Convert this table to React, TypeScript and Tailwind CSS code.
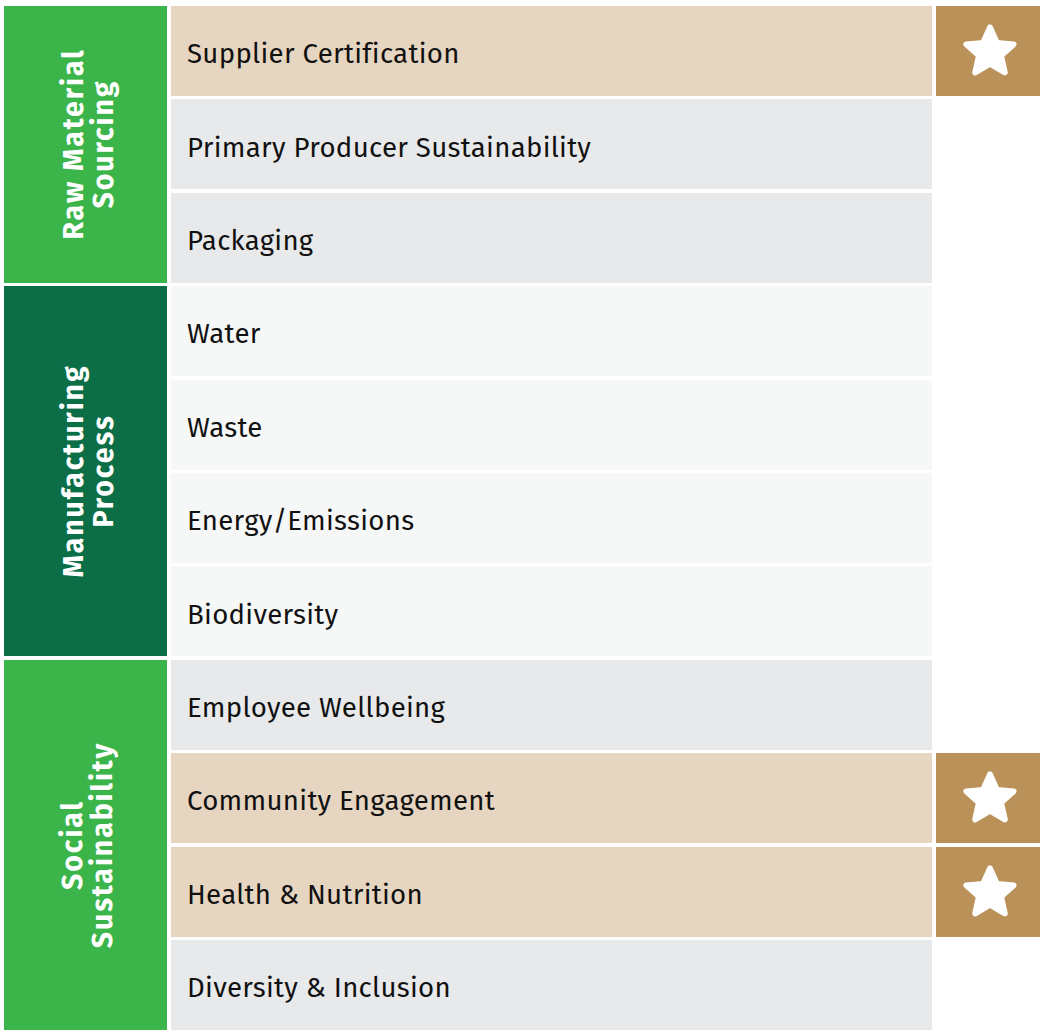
import React from "react";

type Row = { label: string; kind: "beige" | "gray" | "light"; star?: boolean };

const rows: Row[] = [
  { label: "Supplier Certification", kind: "beige", star: true },
  { label: "Primary Producer Sustainability", kind: "gray" },
  { label: "Packaging", kind: "gray" },
  { label: "Water", kind: "light" },
  { label: "Waste", kind: "light" },
  { label: "Energy/Emissions", kind: "light" },
  { label: "Biodiversity", kind: "light" },
  { label: "Employee Wellbeing", kind: "gray" },
  { label: "Community Engagement", kind: "beige", star: true },
  { label: "Health & Nutrition", kind: "beige", star: true },
  { label: "Diversity & Inclusion", kind: "gray" },
];

function Star() {
  return (
    <svg width="58" height="56" viewBox="0 0 54 52" className="ml-[4px]">
      <polygon
        points="27,4 33.5,18.5 49,19.8 37.3,30.3 40.8,46 27,37.8 13.2,46 16.7,30.3 5,19.8 20.5,18.5"
        fill="#ffffff"
        stroke="#ffffff"
        strokeWidth="5.5"
        strokeLinejoin="round"
      />
    </svg>
  );
}

function Category({ lines, className }: { lines: [string, string]; className: string }) {
  return (
    <div className={`flex items-center justify-center overflow-hidden ${className}`}>
      <p className="-rotate-90 translate-x-[3px] whitespace-nowrap text-center text-[28.5px] font-bold leading-[30px] tracking-[1.9px] text-white">
        {lines[0]}
        <br />
        {lines[1]}
      </p>
    </div>
  );
}

export default function App() {
  return (
    <div
      className="h-[1033px] w-[1045px] bg-white pl-[4px] pt-[6px]"
      style={{ fontFamily: '"Fira Sans", "Noto Sans", "Open Sans", sans-serif' }}
    >
      <div className="grid grid-cols-[163px_761px_104px] grid-rows-[repeat(11,90px)] gap-x-[4px] gap-y-[3.4px]">
        <Category lines={["Raw Material", "Sourcing"]} className="col-start-1 row-start-1 row-span-3 bg-[#3BB54A]" />
        <Category lines={["Manufacturing", "Process"]} className="col-start-1 row-start-4 row-span-4 bg-[#0B6E46]" />
        <Category lines={["Social", "Sustainability"]} className="col-start-1 row-start-8 row-span-4 bg-[#3BB54A]" />
        {rows.map((r, i) => (
          <React.Fragment key={r.label}>
            <div
              className={`col-start-2 flex items-center pl-[16px] pt-[6px] text-[27.6px] tracking-[0.3px] text-[#111111] ${
                r.kind === "beige" ? "bg-[#E6D5C0]" : r.kind === "gray" ? "bg-[#E8E9EB]" : "bg-[#F6F7F7]"
              }`}
              style={{ gridRowStart: i + 1 }}
            >
              {r.label}
            </div>
            {r.star && (
              <div
                className="col-start-3 flex items-center justify-center bg-[#BA9158]"
                style={{ gridRowStart: i + 1 }}
              >
                <Star />
              </div>
            )}
          </React.Fragment>
        ))}
      </div>
    </div>
  );
}
